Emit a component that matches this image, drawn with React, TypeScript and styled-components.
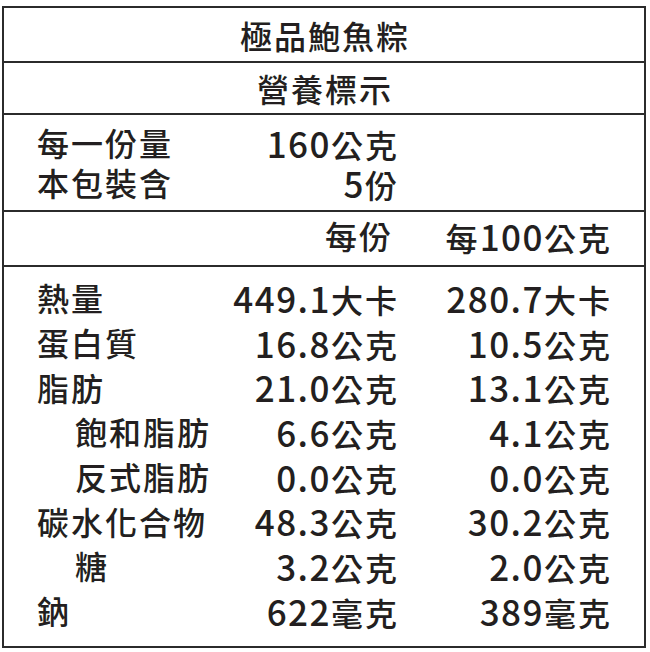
import React from 'react';
import styled, { createGlobalStyle } from 'styled-components';

const GlobalStyle = createGlobalStyle`
  html, body {
    margin: 0;
    padding: 0;
    background: #ffffff;
  }
  body {
    font-family: "Noto Sans CJK TC", "Noto Sans", sans-serif;
    color: #231f20;
  }
`;

const Label = styled.div`
  box-sizing: border-box;
  width: 644px;
  height: 642px;
  margin: 6px 0 0 2px;
  border: 2px solid #2b2b2b;
  display: flex;
  flex-direction: column;
  font-size: 32px;
  font-weight: 500;
  letter-spacing: 2px;
`;

const TitleBar = styled.div<{ $h: number }>`
  height: ${p => p.$h}px;
  display: flex;
  align-items: center;
  justify-content: center;
  border-bottom: 2px solid #2b2b2b;
  padding-left: 2px;
  line-height: 1;
`;

const Section = styled.div<{ $pt: number; $pb: number; $row?: number; $last?: boolean }>`
  display: grid;
  grid-template-columns: 1fr 172px 213px;
  grid-auto-rows: ${p => p.$row ?? 44.7}px;
  padding: ${p => p.$pt}px 32px ${p => p.$pb}px 33px;
  border-bottom: ${p => (p.$last ? 'none' : '2px solid #2b2b2b')};
  align-items: center;
  line-height: 1;
  flex: ${p => (p.$last ? 1 : 'none')};
`;

const Name = styled.span<{ $indent?: boolean }>`
  padding-left: ${p => (p.$indent ? '38px' : '0')};
  white-space: nowrap;
`;

const Value = styled.span<{ $pad?: number }>`
  text-align: right;
  white-space: nowrap;
  padding-right: ${p => p.$pad ?? 0}px;
`;

const Num = styled.span`
  font-size: 35px;
  letter-spacing: 1.5px;
`;

function Amount({ text, pad }: { text: string; pad?: number }) {
  const m = text.match(/^(\D*)([\d.]+)(.*)$/);
  if (!m) return <Value $pad={pad}>{text}</Value>;
  return (
    <Value $pad={pad}>
      {m[1]}
      <Num>{m[2]}</Num>
      {m[3]}
    </Value>
  );
}

const serving = [
  { name: '每一份量', value: '160公克' },
  { name: '本包裝含', value: '5份' },
];

const rows = [
  { name: '熱量', a: '449.1大卡', b: '280.7大卡' },
  { name: '蛋白質', a: '16.8公克', b: '10.5公克' },
  { name: '脂肪', a: '21.0公克', b: '13.1公克' },
  { name: '飽和脂肪', a: '6.6公克', b: '4.1公克', indent: true },
  { name: '反式脂肪', a: '0.0公克', b: '0.0公克', indent: true },
  { name: '碳水化合物', a: '48.3公克', b: '30.2公克' },
  { name: '糖', a: '3.2公克', b: '2.0公克', indent: true },
  { name: '鈉', a: '622毫克', b: '389毫克' },
];

export default function App() {
  return (
    <>
      <GlobalStyle />
      <Label>
        <TitleBar $h={53}>極品鮑魚粽</TitleBar>
        <TitleBar $h={50}>營養標示</TitleBar>
        <Section $pt={7} $pb={8} $row={40}>
          {serving.map(s => (
            <React.Fragment key={s.name}>
              <Name>{s.name}</Name>
              <Amount text={s.value} />
              <span />
            </React.Fragment>
          ))}
        </Section>
        <Section $pt={0} $pb={7} $row={46}>
          <span />
          <Value $pad={6}>每份</Value>
          <Amount text="每100公克" />
        </Section>
        <Section $pt={8} $pb={0} $last>
          {rows.map(r => (
            <React.Fragment key={r.name}>
              <Name $indent={r.indent}>{r.name}</Name>
              <Amount text={r.a} />
              <Amount text={r.b} />
            </React.Fragment>
          ))}
        </Section>
      </Label>
    </>
  );
}
